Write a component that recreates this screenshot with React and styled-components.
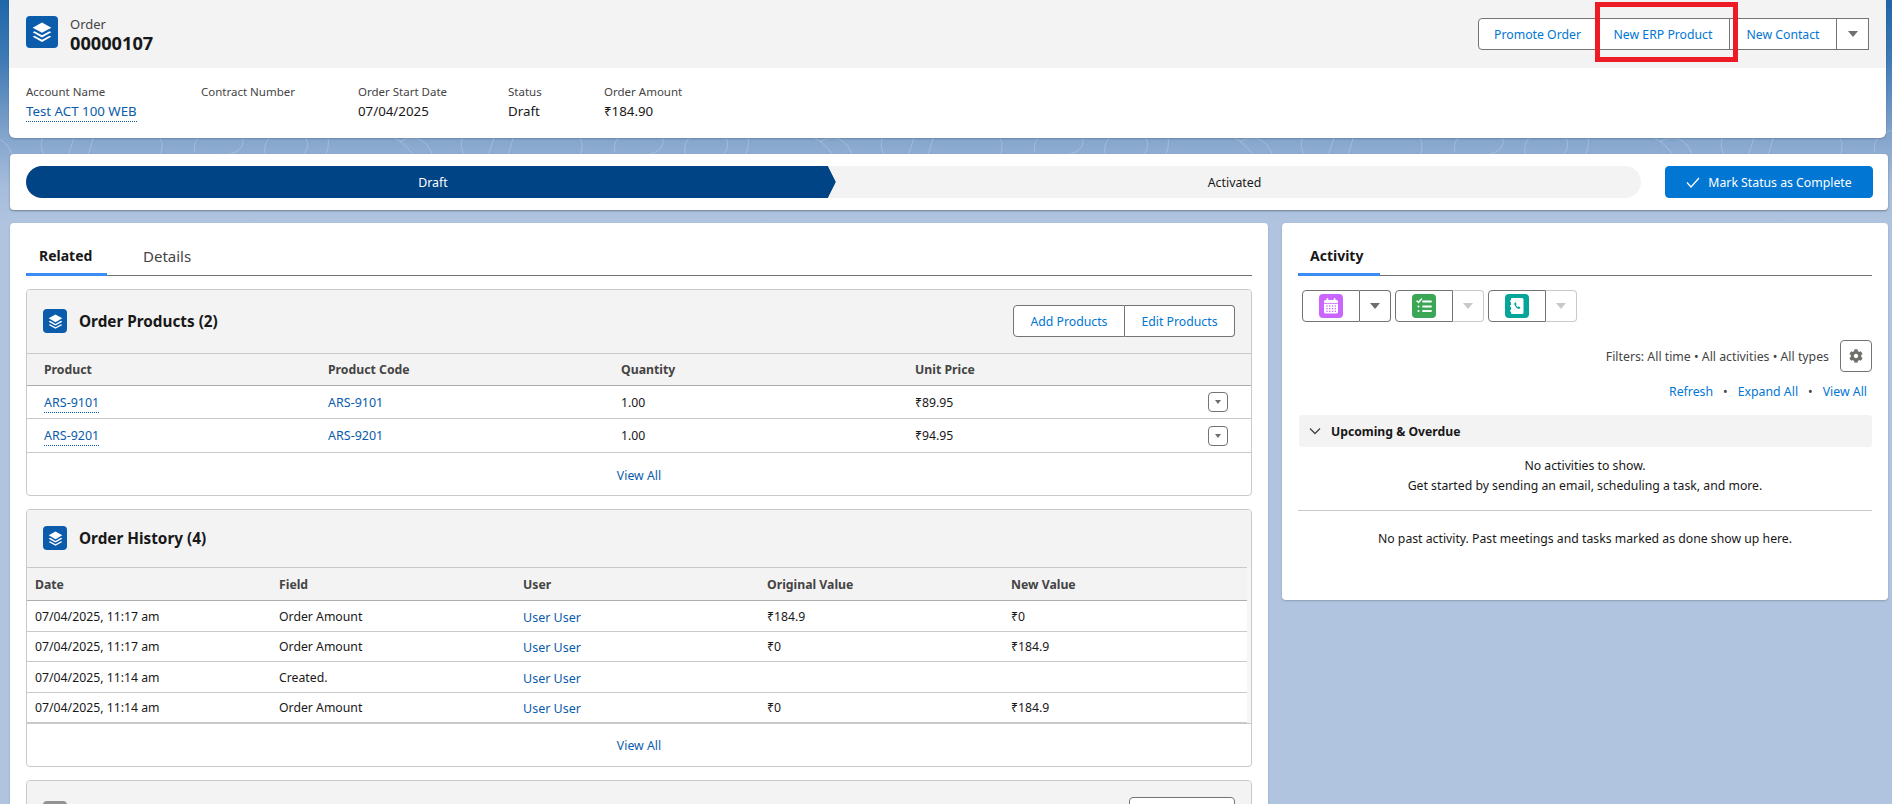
import React from "react";
import styled, { createGlobalStyle } from "styled-components";
import { FaCog } from "react-icons/fa";

const Global = createGlobalStyle`
  html, body { margin: 0; padding: 0; height: 100%; overflow: hidden; }
  body { font-family: "Noto Sans", "Open Sans", "Liberation Sans", sans-serif; font-size: 12.3px; color: #181818; }
  * { box-sizing: border-box; }
`;

const Page = styled.div`
  position: relative;
  width: 1892px;
  height: 804px;
  overflow: hidden;
  background: linear-gradient(180deg, #1f66a8 0, #3f7ab5 60px, #7fa1ca 130px, #a5bcdb 185px, #b0c4df 225px, #b0c4df 100%);
`;
const Swirls = styled.svg`
  position: absolute;
  inset: 0;
  width: 100%;
  height: 240px;
`;
const Stack = styled.div`
  position: relative;
  display: flex;
  flex-direction: column;
  padding-left: 10px;
  padding-right: 4px;
`;
const HeaderCard = styled.section`
  margin-left: -1px;
  margin-right: 2px;
  height: 138px;
  background: #fff;
  border-radius: 0 0 6px 6px;
  box-shadow: 0 1px 2px rgba(0, 0, 0, 0.2);
  overflow: hidden;
`;
const HeaderTop = styled.div`
  height: 68px;
  background: #f3f3f3;
  display: flex;
  justify-content: space-between;
  padding: 16px 17px 0 17px;
`;
const TitleWrap = styled.div`
  display: flex;
  gap: 12px;
`;
const TitleText = styled.div`
  display: flex;
  flex-direction: column;
  margin-top: 1px;
`;
const ObjectName = styled.span`
  font-size: 13px;
  line-height: 15px;
  color: #444;
`;
const RecordName = styled.span`
  font-size: 18.2px;
  font-weight: 700;
  line-height: 22px;
  color: #181818;
`;
const IconTile = styled.span`
  width: ${(p) => p.$size}px;
  height: ${(p) => p.$size}px;
  border-radius: 4px;
  background: ${(p) => p.$bg};
  display: inline-flex;
  align-items: center;
  justify-content: center;
  flex: none;
`;
const ActionGroup = styled.div`
  position: relative;
  display: flex;
  height: 32px;
  margin-top: ${(p) => p.$top || 0}px;
`;
const GroupButton = styled.button`
  width: ${(p) => p.$w}px;
  height: 32px;
  padding: 0;
  background: #fff;
  border: 1px solid #747474;
  border-left-width: 0;
  color: #0176d3;
  font: inherit;
  font-size: 12.25px;
  display: inline-flex;
  align-items: center;
  justify-content: center;
  &:first-child { border-left-width: 1px; border-radius: 4px 0 0 4px; }
  &:last-child { border-radius: 0 4px 4px 0; }
`;
const RedBox = styled.div`
  position: absolute;
  left: 117px;
  top: -16px;
  width: 143px;
  height: 60px;
  border: 5px solid #ed1c24;
`;
const Caret = styled.span`
  width: 0;
  height: 0;
  border-left: ${(p) => p.$s || 5}px solid transparent;
  border-right: ${(p) => p.$s || 5}px solid transparent;
  border-top: ${(p) => (p.$s || 5) * 1.25}px solid ${(p) => p.$c || "#706e6b"};
`;
const Highlights = styled.div`
  display: grid;
  grid-template-columns: 175px 157px 150px 96px auto;
  justify-content: start;
  padding: 16px 17px 0;
`;
const HLabel = styled.div`
  font-size: 11.5px;
  line-height: 16px;
  color: #444;
`;
const HValue = styled.div`
  font-size: 13.3px;
  line-height: 18px;
  margin-top: 2px;
  color: #181818;
`;
const DottedLink = styled.a`
  color: ${(p) => p.$c || "#0b5cab"};
  font-size: ${(p) => p.$fs || 13.3}px;
  border-bottom: 1px dotted #0b5cab;
  padding-bottom: 1px;
`;
const PathCard = styled.section`
  margin-top: 16px;
  height: 56px;
  background: #fff;
  border-radius: 4px;
  box-shadow: 0 1px 2px rgba(0, 0, 0, 0.35);
  padding: 12px 15px 0 16px;
  display: flex;
`;
const StepDone = styled.div`
  width: 810px;
  height: 32px;
  padding-left: 4px;
  background: #014486;
  color: #fff;
  font-size: 12.3px;
  display: flex;
  align-items: center;
  justify-content: center;
  border-radius: 16px 0 0 16px;
  clip-path: polygon(0 0, calc(100% - 8px) 0, 100% 50%, calc(100% - 8px) 100%, 0 100%);
`;
const StepTodo = styled.div`
  width: 813px;
  margin-left: -8px;
  height: 32px;
  background: #f3f3f3;
  color: #181818;
  font-size: 12.3px;
  display: flex;
  align-items: center;
  justify-content: center;
  border-radius: 0 16px 16px 0;
  clip-path: polygon(0 0, 100% 0, 100% 100%, 0 100%, 8px 50%);
`;
const CompleteButton = styled.button`
  margin-left: 24px;
  width: 208px;
  height: 32px;
  background: #0176d3;
  color: #fff;
  border: 1px solid #0176d3;
  border-radius: 4px;
  font: inherit;
  font-size: 12.25px;
  display: inline-flex;
  align-items: center;
  justify-content: center;
  gap: 8px;
`;
const Columns = styled.div`
  margin-top: 13px;
  display: grid;
  grid-template-columns: 1258px 606px;
  column-gap: 14px;
  align-items: start;
`;
const Panel = styled.section`
  background: #fff;
  border-radius: 4px;
  box-shadow: 0 1px 2px rgba(0, 0, 0, 0.2);
  padding: 0 16px 0 16px;
  height: ${(p) => p.$h}px;
`;
const TabBar = styled.div`
  height: 53px;
  display: flex;
  align-items: flex-end;
  border-bottom: 1px solid #747474;
`;
const Tab = styled.div`
  width: ${(p) => p.$w}px;
  height: 34px;
  margin-bottom: -1px;
  font-size: ${(p) => (p.$active ? 14 : 15)}px;
  font-weight: ${(p) => (p.$active ? 700 : 400)};
  color: ${(p) => (p.$active ? "#181818" : "#444")};
  border-bottom: 3px solid ${(p) => (p.$active ? "#3a8df5" : "transparent")};
  padding-left: ${(p) => p.$pad}px;
  line-height: 20px;
  padding-top: 4px;
`;
const RelatedCard = styled.div`
  margin-top: ${(p) => p.$top}px;
  border: 1px solid #c9c9c9;
  border-radius: 4px;
  background: #fff;
  height: ${(p) => p.$h}px;
  overflow: hidden;
`;
const CardHead = styled.div`
  height: ${(p) => p.$h}px;
  background: #f3f3f3;
  display: flex;
  align-items: center;
  justify-content: space-between;
  padding: 0 16px 1px 16px;
`;
const CardTitle = styled.div`
  display: flex;
  align-items: center;
  gap: 12px;
  font-size: 15.3px;
  font-weight: 700;
  color: #181818;
`;
const Row = styled.div`
  display: grid;
  grid-template-columns: ${(p) => p.$cols};
  align-items: center;
  height: ${(p) => p.$h}px;
  padding-left: ${(p) => p.$pad}px;
  padding-right: ${(p) => p.$right || 0}px;
  border-top: ${(p) => (p.$first ? "1px solid #c9c9c9" : "none")};
  border-bottom: 1px solid ${(p) => (p.$head ? "#aeaeae" : "#c9c9c9")};
  background: ${(p) => (p.$head ? "#f3f3f3" : "#fff")};
  font-size: 12.25px;
  font-weight: ${(p) => (p.$head ? 700 : 400)};
  color: ${(p) => (p.$head ? "#444" : "#181818")};
`;
const RowStrip = styled.div`
  background: #f6f6f6;
  padding-right: ${(p) => p.$right || 0}px;
  border-bottom: 1px solid #c9c9c9;
`;
const TableLink = styled.a`
  color: #0b5cab;
  font-size: 12.5px;
  margin-top: ${(p) => p.$nudge || 0}px;
`;
const RowMenu = styled.button`
  justify-self: end;
  width: 20px;
  height: 20px;
  padding: 0;
  border: 1px solid #747474;
  border-radius: 4px;
  background: #fff;
  display: inline-flex;
  align-items: center;
  justify-content: center;
`;
const ViewAll = styled.div`
  height: ${(p) => p.$h}px;
  display: flex;
  align-items: center;
  justify-content: center;
  color: #0b5cab;
  font-size: 12.3px;
`;
const SoloButton = styled.button`
  width: 106px;
  height: 32px;
  background: #fff;
  border: 1px solid #747474;
  border-radius: 4px;
`;
const Composer = styled.div`
  display: flex;
  gap: 4px;
  margin-top: 14px;
  padding-left: 4px;
`;
const ComposerMain = styled.div`
  width: 58px;
  height: 32px;
  border: 1px solid #747474;
  border-radius: 4px 0 0 4px;
  display: flex;
  align-items: center;
  justify-content: center;
`;
const ComposerSide = styled.div`
  width: 31px;
  height: 32px;
  border: 1px solid ${(p) => (p.$off ? "#c9c9c9" : "#747474")};
  border-left: none;
  border-radius: 0 4px 4px 0;
  display: flex;
  align-items: center;
  justify-content: center;
`;
const ComposerItem = styled.div`
  display: flex;
`;
const FilterRow = styled.div`
  margin-top: 18px;
  display: flex;
  justify-content: flex-end;
  align-items: center;
  gap: 11px;
  font-size: 12.3px;
  color: #444;
`;
const GearButton = styled.button`
  width: 32px;
  height: 32px;
  padding: 0;
  background: #fff;
  border: 1px solid #747474;
  border-radius: 4px;
  display: inline-flex;
  align-items: center;
  justify-content: center;
  color: #706e6b;
`;
const LinkRow = styled.div`
  margin-top: 10px;
  height: 18px;
  display: flex;
  justify-content: flex-end;
  align-items: center;
  gap: 10px;
  padding-right: 5px;
  font-size: 12.3px;
  color: #444;
`;
const BlueText = styled.span`
  color: #0176d3;
`;
const Section = styled.div`
  margin-top: 15px;
  margin-left: 1px;
  height: 32px;
  border-radius: 4px;
  background: #f3f3f3;
  display: flex;
  align-items: center;
  gap: 10px;
  padding-left: 10px;
  font-size: 12.2px;
  font-weight: 700;
  color: #181818;
`;
const Empty = styled.div`
  margin-top: ${(p) => p.$top}px;
  text-align: center;
  font-size: 12.25px;
  line-height: 20px;
  color: #181818;
`;
const Divider = styled.div`
  margin-top: 14px;
  height: 1px;
  background: #c9c9c9;
`;

const LayersIcon = ({ size, color = "#fff" }) => (
  <svg width={size} height={size} viewBox="0 0 24 24" fill={color}>
    <path d="M12 3.2 20.6 8 12 12.8 3.4 8Z" />
    <path d="M3.4 12.2 5.1 11.2 12 15 18.9 11.2 20.6 12.2 12 17Z" />
    <path d="M3.4 16.4 5.1 15.4 12 19.2 18.9 15.4 20.6 16.4 12 21.2Z" />
  </svg>
);
const CalendarIcon = () => (
  <svg width="18" height="18" viewBox="0 0 18 18">
    <rect x="4.5" y="1" width="1.800" height="3.500" rx="0.900" fill="#fff" />
    <rect x="11.700" y="1" width="1.800" height="3.500" rx="0.900" fill="#fff" />
    <rect x="2" y="3" width="14" height="13.500" rx="1.500" fill="#fff" />
    <rect x="2" y="6" width="14" height="0.800" fill="#cb65ff" />
    {[4.3, 7.100, 9.900, 12.700].map((x) =>
      [8.300, 11, 13.700].map((y) => (
        <rect key={`${x}-${y}`} x={x} y={y} width="1.300" height="1.300" fill="#cb65ff" />
      ))
    )}
  </svg>
);
const TaskIcon = () => (
  <svg width="18" height="18" viewBox="0 0 18 18" fill="none" stroke="#fff" strokeLinecap="round">
    <path d="M2 4 3.500 5.500 6.500 2" strokeWidth="1.500" />
    <path d="M8 4.500h8M8 9.500h8M8 14h8" strokeWidth="1.800" />
    <circle cx="3.500" cy="9.500" r="1" fill="#fff" stroke="none" />
    <circle cx="3.500" cy="14" r="1" fill="#fff" stroke="none" />
  </svg>
);
const LogCallIcon = () => (
  <svg width="18" height="18" viewBox="0 0 18 18" fill="#fff">
    <path fillRule="evenodd" d="M4 1h10a1.500 1.500 0 0 1 1.500 1.500v13A1.500 1.500 0 0 1 14 17H4a1 1 0 0 1-1-1v-1.500H2v-1.600h1V9.800H2V8.200h1V5.100H2V3.500h1V2a1 1 0 0 1 1-1Zm3.400 4.200-.9.700c-.4.400-.3 1.400.5 2.800.8 1.400 2 2.600 3.200 3.100.8.300 1.300.200 1.600-.2l.6-.8c.1-.2 0-.4-.2-.5l-1.400-.8c-.2-.1-.4 0-.5.100l-.5.500c-.8-.4-1.500-1.200-1.900-2.100l.5-.5c.1-.1.1-.3.1-.5l-.7-1.500c-.1-.2-.3-.3-.4-.2Z" />
  </svg>
);
const Check = () => (
  <svg width="14" height="14" viewBox="0 0 14 14" fill="none" stroke="#fff" strokeWidth="1.300">
    <path d="M1 7.500 5 12 13 3" />
  </svg>
);
const Chevron = () => (
  <svg width="12" height="12" viewBox="0 0 12 12" fill="none" stroke="#444" strokeWidth="1.300">
    <path d="M1 3.500 6 8.500 11 3.500" />
  </svg>
);

const swirl = "M0 20c20-14 40 10 30 30M70 6c-14 10-10 30 4 34M96 10l-10 30M118 0l-12 40M175 10c10 8 8 20 2 30M215 30c-6-20 30-30 44-18 12 10-4 24-20 20M290 40c-14-16 2-34 22-32 14 2 20 14 12 24M345 8c8 14 0 26-4 34M395 10c20 2 34 14 42 30";
const productCols = "284px 293px 294px 1fr";
const historyCols = "244px 244px 244px 244px 1fr";
const productRows = [
  { id: "ARS-9101", q: "1.00", p: "₹89.95", h: 33 },
  { id: "ARS-9201", q: "1.00", p: "₹94.95", h: 34 },
];
const historyRows = [
  { d: "07/04/2025, 11:17 am", f: "Order Amount", o: "₹184.9", n: "₹0", h: 31 },
  { d: "07/04/2025, 11:17 am", f: "Order Amount", o: "₹0", n: "₹184.9", h: 30 },
  { d: "07/04/2025, 11:14 am", f: "Created.", o: "", n: "", h: 31 },
  { d: "07/04/2025, 11:14 am", f: "Order Amount", o: "₹0", n: "₹184.9", h: 30 },
];

const composers = [
  { bg: "#cb65ff", icon: <CalendarIcon />, off: false },
  { bg: "#3ba755", icon: <TaskIcon />, off: true },
  { bg: "#06a59a", icon: <LogCallIcon />, off: true },
];

const PriceCell = styled.div`
  display: flex;
  justify-content: space-between;
  align-items: center;
`;
function Actions({ price }) {
  return (
    <PriceCell>
      <span>{price}</span>
      <RowMenu><Caret $s={3.5} /></RowMenu>
    </PriceCell>
  );
}

export default function App() {
  return (
    <Page>
      <Global />
      <Swirls viewBox="0 0 1892 240" preserveAspectRatio="none" fill="none" stroke="#fff" strokeOpacity="0.22">
        {[-20, 400, 820, 1240, 1660].map((x) => (
          <path key={x} d={swirl} transform={`translate(${x} 122)`} />
        ))}
      </Swirls>
      <Stack>
        <HeaderCard>
          <HeaderTop>
            <TitleWrap>
              <IconTile $size={32} $bg="#0b5cab"><LayersIcon size={26} /></IconTile>
              <TitleText>
                <ObjectName>Order</ObjectName>
                <RecordName>00000107</RecordName>
              </TitleText>
            </TitleWrap>
            <ActionGroup $top={2}>
              <GroupButton $w={119}>Promote Order</GroupButton>
              <GroupButton $w={133}>New ERP Product</GroupButton>
              <GroupButton $w={107}>New Contact</GroupButton>
              <GroupButton $w={32}><Caret /></GroupButton>
              <RedBox />
            </ActionGroup>
          </HeaderTop>
          <Highlights>
            <div><HLabel>Account Name</HLabel><HValue><DottedLink>Test ACT 100 WEB</DottedLink></HValue></div>
            <div><HLabel>Contract Number</HLabel></div>
            <div><HLabel>Order Start Date</HLabel><HValue>07/04/2025</HValue></div>
            <div><HLabel>Status</HLabel><HValue>Draft</HValue></div>
            <div><HLabel>Order Amount</HLabel><HValue>₹184.90</HValue></div>
          </Highlights>
        </HeaderCard>

        <PathCard>
          <StepDone>Draft</StepDone>
          <StepTodo>Activated</StepTodo>
          <CompleteButton><Check />Mark Status as Complete</CompleteButton>
        </PathCard>

        <Columns>
          <Panel $h={600}>
            <TabBar>
              <Tab $active $w={81} $pad={13}>Related</Tab>
              <Tab $w={100} $pad={36}>Details</Tab>
            </TabBar>
            <RelatedCard $top={13} $h={207}>
              <CardHead $h={63}>
                <CardTitle>
                  <IconTile $size={24} $bg="#0b5cab"><LayersIcon size={19} /></IconTile>
                  Order Products (2)
                </CardTitle>
                <ActionGroup>
                  <GroupButton $w={112}>Add Products</GroupButton>
                  <GroupButton $w={110}>Edit Products</GroupButton>
                </ActionGroup>
              </CardHead>
              <Row $head $first $cols={productCols} $h={33} $pad={17}>
                <span>Product</span><span>Product Code</span><span>Quantity</span><span>Unit Price</span>
              </Row>
              {productRows.map((r) => (
                <Row key={r.id} $cols={productCols} $h={r.h} $pad={17} $right={23}>
                  <span><DottedLink $fs={12.5}>{r.id}</DottedLink></span>
                  <TableLink>{r.id}</TableLink>
                  <span>{r.q}</span>
                  <Actions price={r.p} />
                </Row>
              ))}
              <ViewAll $h={44}>View All</ViewAll>
            </RelatedCard>

            <RelatedCard $top={13} $h={258}>
              <CardHead $h={57}>
                <CardTitle>
                  <IconTile $size={24} $bg="#0b5cab"><LayersIcon size={19} /></IconTile>
                  Order History (4)
                </CardTitle>
              </CardHead>
              <RowStrip $right={4}>
                <Row $head $first $cols={historyCols} $h={34} $pad={8}>
                  <span>Date</span><span>Field</span><span>User</span><span>Original Value</span><span>New Value</span>
                </Row>
                {historyRows.map((r, i) => (
                  <Row key={i} $cols={historyCols} $h={r.h} $pad={8}>
                    <span>{r.d}</span>
                    <span>{r.f}</span>
                    <TableLink $nudge={2}>User User</TableLink>
                    <span>{r.o}</span>
                    <span>{r.n}</span>
                  </Row>
                ))}
              </RowStrip>
              <ViewAll $h={42}>View All</ViewAll>
            </RelatedCard>

            <RelatedCard $top={13} $h={80}>
              <CardHead $h={65}>
                <CardTitle>
                  <IconTile $size={24} $bg="#939393" />
                </CardTitle>
                <SoloButton />
              </CardHead>
            </RelatedCard>
          </Panel>

          <Panel $h={377}>
            <TabBar>
              <Tab $active $w={82} $pad={12}>Activity</Tab>
            </TabBar>
            <Composer>
              {composers.map((c, i) => (
                <ComposerItem key={i}>
                  <ComposerMain>
                    <IconTile $size={24} $bg={c.bg}>{c.icon}</IconTile>
                  </ComposerMain>
                  <ComposerSide $off={c.off}>
                    <Caret $c={c.off ? "#c9c9c9" : "#706e6b"} />
                  </ComposerSide>
                </ComposerItem>
              ))}
            </Composer>
            <FilterRow>
              <span>Filters: All time • All activities • All types</span>
              <GearButton><FaCog size={14} /></GearButton>
            </FilterRow>
            <LinkRow>
              <BlueText>Refresh</BlueText>•<BlueText>Expand All</BlueText>•<BlueText>View All</BlueText>
            </LinkRow>
            <Section><Chevron />Upcoming &amp; Overdue</Section>
            <Empty $top={9}>No activities to show.<br />Get started by sending an email, scheduling a task, and more.</Empty>
            <Divider />
            <Empty $top={18}>No past activity. Past meetings and tasks marked as done show up here.</Empty>
          </Panel>
        </Columns>
      </Stack>
    </Page>
  );
}
